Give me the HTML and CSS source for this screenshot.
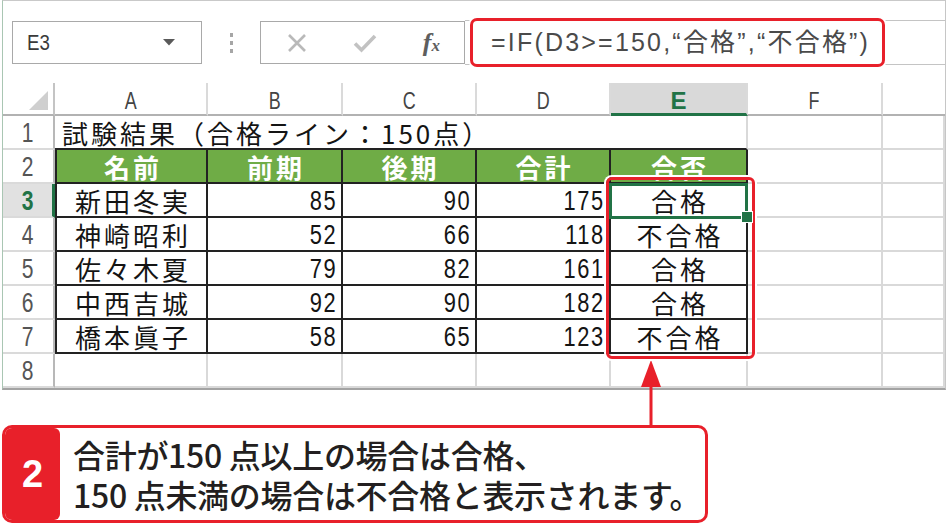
FILE: index.html
```html
<!DOCTYPE html>
<html lang="ja">
<head>
<meta charset="utf-8">
<title>IF関数</title>
<link rel="stylesheet" href="styles.css">
</head>
<body>
<div class="page">
  <div class="excel">
    <div class="fbar">
      <div class="namebox">
        <span class="cellref">E3</span>
        <svg class="dd" width="12" height="7" viewBox="0 0 12 7"><polygon points="0,0 12,0 6,6.5" fill="#5a5a5a"/></svg>
      </div>
      <div class="dots"><i></i><i></i><i></i></div>
      <div class="fnbox">
        <svg width="20" height="20" viewBox="0 0 20 20"><path d="M2 2 L18 18 M18 2 L2 18" stroke="#b9b9b9" stroke-width="2.6" fill="none"/></svg>
        <svg width="24" height="20" viewBox="0 0 24 20"><path d="M2 10.5 L8.5 17 L22 3" stroke="#c2c2c2" stroke-width="3.6" fill="none"/></svg>
        <span class="fx">f<small>x</small></span>
      </div>
      <div class="input">
        <div class="formula"><span class="ftxt">=IF(D3&gt;=150,“合格”,“不合格”)</span></div>
      </div>
    </div>
    <div class="sheet">
      <div class="ch corner"><svg width="19" height="19" viewBox="0 0 19 19"><polygon points="19,0 19,19 0,19" fill="#cfcfcf"/></svg></div>
      <div class="ch"><span class="nw">A</span></div>
      <div class="ch"><span class="nw">B</span></div>
      <div class="ch"><span class="nw">C</span></div>
      <div class="ch"><span class="nw">D</span></div>
      <div class="ch act">E</div>
      <div class="ch"><span class="nw">F</span></div>
      <div class="ch last"></div>

      <div class="rh"><span class="nw">1</span></div>
      <div class="c title tb">試験結果（合格ライン：150点）</div>
      <div class="c tb"></div>
      <div class="c"></div>
      <div class="c"></div>

      <div class="rh"><span class="nw">2</span></div>
      <div class="c t l hd">名前</div>
      <div class="c t hd">前期</div>
      <div class="c t hd">後期</div>
      <div class="c t hd">合計</div>
      <div class="c t hd">合否</div>
      <div class="c"></div>
      <div class="c"></div>

      <div class="rh act"><span class="nw">3</span></div>
      <div class="c t l nm">新田冬実</div>
      <div class="c t num"><span class="nw">85</span></div>
      <div class="c t num"><span class="nw">90</span></div>
      <div class="c t num"><span class="nw">175</span></div>
      <div class="c t nm sel">合格</div>
      <div class="c"></div>
      <div class="c"></div>

      <div class="rh"><span class="nw">4</span></div>
      <div class="c t l nm">神崎昭利</div>
      <div class="c t num"><span class="nw">52</span></div>
      <div class="c t num"><span class="nw">66</span></div>
      <div class="c t num"><span class="nw">118</span></div>
      <div class="c t nm">不合格</div>
      <div class="c"></div>
      <div class="c"></div>

      <div class="rh"><span class="nw">5</span></div>
      <div class="c t l nm">佐々木夏</div>
      <div class="c t num"><span class="nw">79</span></div>
      <div class="c t num"><span class="nw">82</span></div>
      <div class="c t num"><span class="nw">161</span></div>
      <div class="c t nm">合格</div>
      <div class="c"></div>
      <div class="c"></div>

      <div class="rh"><span class="nw">6</span></div>
      <div class="c t l nm">中西吉城</div>
      <div class="c t num"><span class="nw">92</span></div>
      <div class="c t num"><span class="nw">90</span></div>
      <div class="c t num"><span class="nw">182</span></div>
      <div class="c t nm">合格</div>
      <div class="c"></div>
      <div class="c"></div>

      <div class="rh"><span class="nw">7</span></div>
      <div class="c t l nm">橋本眞子</div>
      <div class="c t num"><span class="nw">58</span></div>
      <div class="c t num"><span class="nw">65</span></div>
      <div class="c t num"><span class="nw">123</span></div>
      <div class="c t nm">不合格</div>
      <div class="c"></div>
      <div class="c"></div>

      <div class="rh"><span class="nw">8</span></div>
      <div class="c"></div>
      <div class="c"></div>
      <div class="c"></div>
      <div class="c"></div>
      <div class="c"></div>
      <div class="c"></div>
      <div class="c"></div>

      <div class="hilite"></div>
    </div>
  </div>

  <div class="callout">
    <div class="badge">2</div>
    <div class="msg">
      <p class="ln">合計が150 点以上の場合は合格、</p>
      <p class="ln">150 点未満の場合は不合格と表示されます。</p>
    </div>
  </div>

  <svg class="arrow" width="24" height="70" viewBox="0 0 24 70">
    <polygon points="12,1 2,28 22,28" fill="#e8202a"/>
    <rect x="10.5" y="27" width="3" height="42" fill="#e8202a"/>
  </svg>
</div>
</body>
</html>
```

FILE: styles.css
```css
* { box-sizing: border-box; margin: 0; padding: 0; }

body {
  background: #fff;
  width: 946px;
  height: 526px;
  overflow: hidden;
  font-family: "Noto Sans CJK JP", "Noto Sans", sans-serif;
}

.page {
  position: relative;
  width: 946px;
  height: 526px;
}

/* narrow, tall digits / letters like the Excel UI font */
.nw {
  display: inline-block;
  font-family: "Liberation Sans", sans-serif;
  font-weight: normal;
  transform: scaleX(0.78);
}

/* ---------- Excel window ---------- */
.excel {
  margin-left: 2px;
  width: 944px;
  border-top: 1px solid #c9c9c9;
  border-left: 1px solid #a9c6b3;
  border-right: 1px solid #c6c6c6;
  border-bottom: 2px solid #a3a3a3;
}

.fbar {
  display: flex;
  align-items: flex-start;
  height: 82px;
  padding-top: 20px;
}

.namebox {
  margin-left: 9px;
  width: 190px;
  height: 43px;
  border: 1px solid #a9a9a9;
  display: flex;
  align-items: center;
  justify-content: space-between;
  padding: 0 26px 0 12px;
}

.cellref {
  display: inline-block;
  font-family: "Liberation Sans", sans-serif;
  font-size: 22px;
  line-height: 1;
  color: #3a3a3a;
  transform: scaleX(0.85);
}

.dots {
  width: 58px;
  height: 43px;
  display: flex;
  flex-direction: column;
  align-items: center;
  justify-content: center;
  gap: 4px;
}

.dots i {
  display: block;
  width: 3px;
  height: 4px;
  background: #a6a6a6;
}

.fnbox {
  width: 205px;
  height: 43px;
  border: 1px solid #a9a9a9;
  display: flex;
  align-items: center;
  justify-content: space-between;
  padding: 0 24px 0 26px;
}

.fx {
  font-family: "Liberation Serif", serif;
  font-style: italic;
  font-weight: bold;
  font-size: 26px;
  color: #5e5e5e;
  line-height: 1;
}

.fx small {
  font-size: 17px;
}

.input {
  flex: 1;
  height: 45px;
  margin-top: -1px;
  border-top: 1px solid #c4c4c4;
  border-bottom: 1px solid #c4c4c4;
  display: flex;
  align-items: center;
  padding-left: 5px;
}

.formula {
  flex: none;
  width: 415px;
  height: 49px;
  border: 3px solid #e8202a;
  border-radius: 7px;
  background: #fff;
  box-shadow: 0 0 0 2px #fff;
  display: flex;
  align-items: center;
  padding-left: 18px;
  white-space: nowrap;
}

.ftxt {
  font-family: "Liberation Sans", "Noto Sans CJK JP", sans-serif;
  font-size: 25px;
  line-height: 1;
  letter-spacing: 2.2px;
  color: #4a4a4a;
}

/* ---------- grid ---------- */
.sheet {
  position: relative;
  display: grid;
  grid-template-columns: 52px 153px 135px 134px 134px 137px 135px 1fr;
  grid-template-rows: 33px repeat(8, 34px);
}

.ch {
  display: flex;
  align-items: center;
  justify-content: center;
  padding-top: 6px;
  border-right: 2px solid #dadada;
  border-bottom: 2px solid #b2b2b2;
  font-size: 23px;
  line-height: 1;
  color: #444;
}

.ch.corner {
  justify-content: flex-end;
  align-items: flex-end;
  padding: 0 5px 4px 0;
  border-right: 2px solid #c4c4c4;
}

.ch.act {
  background: #d9d9d9;
  color: #217346;
  font-weight: bold;
  font-family: "Liberation Sans", sans-serif;
  font-size: 24px;
  border-bottom: 3px solid #217346;
}

.ch.last {
  border-right: none;
}

.rh {
  display: flex;
  align-items: center;
  justify-content: center;
  padding-top: 2px;
  border-right: 2px solid #b8b8b8;
  border-bottom: 2px solid #dadada;
  font-size: 27px;
  line-height: 1;
  color: #555;
}

.rh.act {
  background: #e1e1e1;
  color: #217346;
  border-right: 3px solid #217346;
}

.rh.act .nw {
  font-weight: bold;
}

.c {
  display: flex;
  align-items: center;
  padding-top: 2px;
  border-right: 2px solid #d9d9d9;
  border-bottom: 2px solid #d9d9d9;
  font-size: 26px;
  line-height: 1;
  color: #141414;
  letter-spacing: 3px;
  white-space: nowrap;
}

.c.title {
  grid-column: span 4;
  padding-left: 7px;
  border-right: none;
}

.c.tb { border-bottom-color: #222; }

.c.t {
  border-right-color: #222;
  border-bottom-color: #222;
}

.c.l { border-left: 2px solid #222; }

.c.hd {
  background: #6fac46;
  color: #fff;
  font-weight: bold;
  justify-content: center;
  padding-left: 3px;
}

.c.nm {
  justify-content: center;
  padding-left: 3px;
}

.c.num {
  justify-content: flex-end;
  padding-right: 4px;
  font-size: 28px;
  letter-spacing: 2px;
}

.c.num .nw {
  transform-origin: right center;
}

.c.sel { position: relative; }

.c.sel::before {
  content: "";
  position: absolute;
  left: -2px;
  top: -1px;
  right: -2px;
  bottom: -3px;
  border: 3px solid #217346;
}

.c.sel::after {
  content: "";
  position: absolute;
  right: -7px;
  bottom: -7px;
  width: 10px;
  height: 10px;
  background: #217346;
  border: 1px solid #fff;
  z-index: 3;
}

.hilite {
  position: absolute;
  left: 603px;
  top: 94px;
  width: 149px;
  height: 182px;
  border: 3px solid #e8202a;
  border-radius: 6px;
  box-shadow: 0 0 0 2px #fff;
  z-index: 2;
}

/* ---------- callout ---------- */
.callout {
  margin: 35px 0 0 2px;
  width: 706px;
  height: 98px;
  border: 3px solid #e8202a;
  border-radius: 10px;
  overflow: hidden;
  display: flex;
}

.badge {
  width: 55px;
  background: #e8202a;
  border-radius: 0 6px 6px 0;
  color: #fff;
  font-family: "Liberation Sans", "Noto Sans", sans-serif;
  font-weight: bold;
  font-size: 38px;
  display: flex;
  align-items: center;
  justify-content: center;
}

.msg {
  flex: 1;
  display: flex;
  flex-direction: column;
  justify-content: center;
  gap: 8px;
  padding-left: 13px;
  font-size: 32px;
  font-weight: 500;
  letter-spacing: -0.3px;
  color: #231f20;
  white-space: nowrap;
}

.ln {
  line-height: 32px;
  height: 32px;
}

.arrow {
  position: absolute;
  left: 639px;
  top: 359px;
}
```
